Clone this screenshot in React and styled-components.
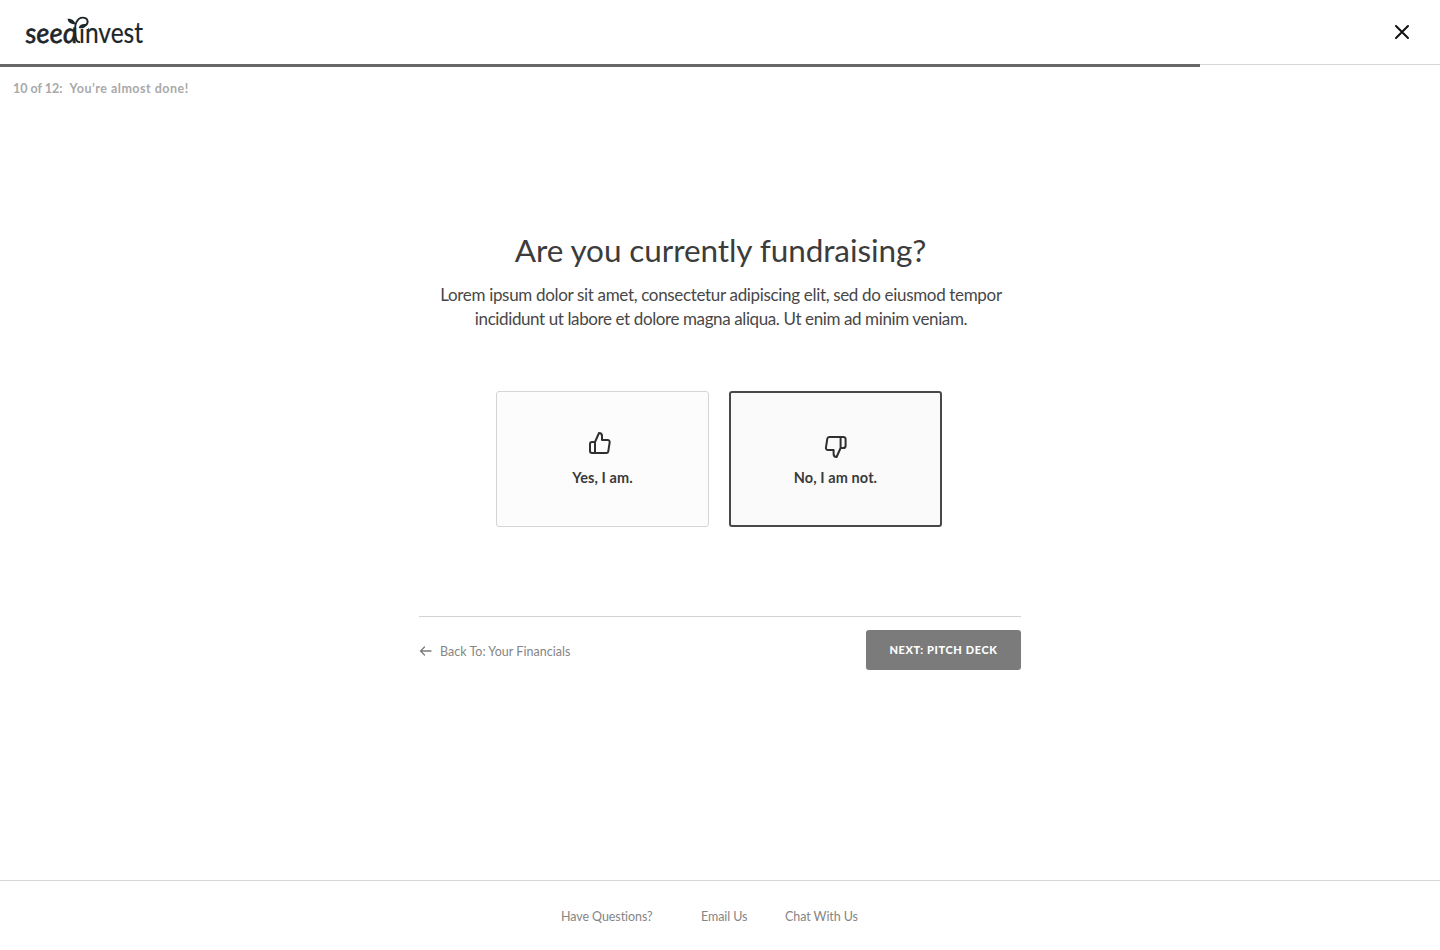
import React from "react";
import styled, { createGlobalStyle } from "styled-components";

const GlobalStyle = createGlobalStyle`
  * { box-sizing: border-box; }
  body { margin: 0; background: #fff; font-family: Lato, "Liberation Sans", sans-serif; font-variant-ligatures: none; color: #3d3c3c; }
`;

const Page = styled.div`
  display: flex;
  flex-direction: column;
  height: 950px;
  overflow: hidden;
`;

const Header = styled.header`
  display: flex;
  justify-content: space-between;
  align-items: flex-start;
  height: 65px;
  flex: none;
  padding: 4px 30px 0 24px;
  border-bottom: 1px solid #d6d6d6;
`;

const CloseButton = styled.button`
  display: flex;
  margin: 20px 0 0;
  padding: 0;
  border: 0;
  background: none;
`;

const Progress = styled.div`
  width: ${(p) => p.$value * 100}%;
  height: 3px;
  flex: none;
  margin-top: -1px;
  background: #676666;
`;

const StepNote = styled.p`
  display: flex;
  gap: 7px;
  margin: 12px 0 0 13px;
  font-size: 12.5px;
  line-height: 20px;
  font-weight: 700;
  white-space: pre;
  color: #a9a9a9;
`;

const Encouragement = styled.span`
  letter-spacing: 0.5px;
`;

const Main = styled.main`
  display: flex;
  flex-direction: column;
  align-items: center;
  width: 602px;
  margin: 127px auto 0 419px;
  flex: 1;
`;

const Title = styled.h1`
  margin: 0 0 0 1px;
  font-size: 31.5px;
  line-height: 48px;
  font-weight: 400;
  letter-spacing: -0.08px;
  white-space: nowrap;
`;

const Lead = styled.p`
  display: flex;
  flex-direction: column;
  align-items: center;
  margin: 9px 0 0 2px;
  font-size: 17px;
  line-height: 24px;
  white-space: nowrap;
  color: #484747;
`;

const LeadLine = styled.span`
  letter-spacing: ${(p) => p.$spacing}px;
`;

const Choices = styled.div`
  display: flex;
  gap: 20px;
  margin: 60px 2px 0 0;
`;

const Choice = styled.button`
  display: flex;
  flex-direction: column;
  align-items: center;
  width: 213px;
  height: 136px;
  padding: ${(p) => (p.$selected ? "41.5px 0 0" : "39px 6px 0 0")};
  border: ${(p) => (p.$selected ? "2px solid #484848" : "1px solid #d4d6d5")};
  border-radius: 3px;
  background: ${(p) => (p.$selected ? "#fafafa" : "#fcfcfc")};
  font-family: inherit;
  color: #3a3a3a;
`;

const ChoiceLabel = styled.span`
  margin: ${(p) => (p.$selected ? "9.5px 0 0" : "13px -6px 0 0")};
  font-size: 14.5px;
  line-height: 20px;
  font-weight: 700;
  letter-spacing: 0.08px;
`;

const Actions = styled.div`
  display: flex;
  justify-content: space-between;
  width: 602px;
  margin-top: 89px;
  padding-top: 13px;
  border-top: 1px solid #d2d4d3;
`;

const BackLink = styled.a`
  display: flex;
  align-items: center;
  gap: 8px;
  height: 42px;
  font-size: 12.5px;
  letter-spacing: 0.02px;
  color: #858585;
`;

const NextButton = styled.button`
  width: 155px;
  height: 40px;
  padding: 0 0 2px;
  border: 0;
  border-radius: 3px;
  background: #7b7b7b;
  color: #fff;
  font-family: inherit;
  font-size: 11px;
  font-weight: 900;
  letter-spacing: 0.62px;
`;

const Footer = styled.footer`
  display: flex;
  height: 70px;
  flex: none;
  padding: 26px 0 0 561px;
  border-top: 1px solid #d6d6d6;
  font-size: 12.5px;
  line-height: 20px;
  letter-spacing: -0.08px;
  color: #858585;
`;

const FooterItem = styled.span`
  width: ${(p) => p.$width}px;
  white-space: nowrap;
`;

const Logo = () => (
  <svg width="132" height="52" viewBox="24 4 132 52" fill="#1d262b">
    <defs>
      <clipPath id="seedClip">
        <rect x="24" y="27.4" width="60" height="20" />
      </clipPath>
      <clipPath id="investClip">
        <path d="M76 29H88V16H150V50H76Z" />
      </clipPath>
    </defs>
    <g clipPath="url(#seedClip)">
      <text transform="translate(26 42.6) skewX(5)" x="0" y="0" fontFamily="Lato" fontSize="28" fontStyle="italic" stroke="#1d262b" strokeWidth="0.65" textLength="52" lengthAdjust="spacingAndGlyphs">seed</text>
    </g>
    <text clipPath="url(#investClip)" x="79" y="42.8" fontFamily="Lato" fontSize="28" stroke="#1d262b" strokeWidth="0.2" textLength="64" lengthAdjust="spacingAndGlyphs">invest</text>
    <path d="M79.3 42 C76.2 42.2 75.6 38 75.4 34 C75.2 29 74.5 26 76.3 22.4 C77.7 19.4 80 17.6 82.7 17.6 C87.8 17.6 89 22.2 86 25" fill="none" stroke="#1d262b" strokeWidth="1.9" strokeLinecap="round" />
    <path d="M67.5 18.8 C71.2 18.6 74.8 20.4 75.4 24.3 C71 24.2 68 22.6 67.5 18.8Z" />
    <path d="M78.8 28 C79.2 24.9 82.5 23.4 87 24.4 C86 27.4 82.5 29 78.8 28Z" />
  </svg>
);

const strokeProps = { fill: "none", strokeLinecap: "round", strokeLinejoin: "round" };

const ThumbUp = () => (
  <svg width="24" height="24" viewBox="0 0 24 24" stroke="#2f2f2f" strokeWidth="2" {...strokeProps}>
    <path d="M14 9V5a3 3 0 0 0-3-3l-4 9v11h11.28a2 2 0 0 0 2-1.7l1.38-9a2 2 0 0 0-2-2.3zM7 22H4a2 2 0 0 1-2-2v-7a2 2 0 0 1 2-2h3" />
  </svg>
);

const ThumbDown = () => (
  <svg width="24" height="24" viewBox="0.4 0 24 24" stroke="#2f2f2f" strokeWidth="2" {...strokeProps}>
    <path d="M10 15v4a3 3 0 0 0 3 3l4-9V2H5.72a2 2 0 0 0-2 1.7l-1.38 9a2 2 0 0 0 2 2.3zm7-13h2.67A2.31 2.31 0 0 1 22 4v7a2.31 2.31 0 0 1-2.33 2H17" />
  </svg>
);

export default function App() {
  return (
    <>
      <GlobalStyle />
      <Page>
        <Header>
          <Logo />
          <CloseButton aria-label="Close">
            <svg width="16" height="16" viewBox="0 0 16 16" stroke="#111" strokeWidth="2" {...strokeProps}>
              <path d="M2 2l12 12M14 2L2 14" />
            </svg>
          </CloseButton>
        </Header>
        <Progress $value={10 / 12} />
        <StepNote>
          <span>10 of 12:</span>
          <Encouragement>You’re almost done!</Encouragement>
        </StepNote>
        <Main>
          <Title>Are you currently fundraising?</Title>
          <Lead>
            <LeadLine $spacing={-0.33}>Lorem ipsum dolor sit amet, consectetur adipiscing elit, sed do eiusmod tempor</LeadLine>
            <LeadLine $spacing={-0.39}>incididunt ut labore et dolore magna aliqua. Ut enim ad minim veniam.</LeadLine>
          </Lead>
          <Choices>
            <Choice>
              <ThumbUp />
              <ChoiceLabel>Yes, I am.</ChoiceLabel>
            </Choice>
            <Choice $selected>
              <ThumbDown />
              <ChoiceLabel $selected>No, I am not.</ChoiceLabel>
            </Choice>
          </Choices>
          <Actions>
            <BackLink>
              <svg width="13" height="12" viewBox="0 0 13 12" stroke="#7b7b7b" strokeWidth="1.3" {...strokeProps}>
                <path d="M12 6H1.5M5.5 2L1.5 6l4 4" />
              </svg>
              Back To: Your Financials
            </BackLink>
            <NextButton>NEXT: PITCH DECK</NextButton>
          </Actions>
        </Main>
        <Footer>
          <FooterItem $width={140}>Have Questions?</FooterItem>
          <FooterItem $width={84}>Email Us</FooterItem>
          <FooterItem $width={80}>Chat With Us</FooterItem>
        </Footer>
      </Page>
    </>
  );
}
